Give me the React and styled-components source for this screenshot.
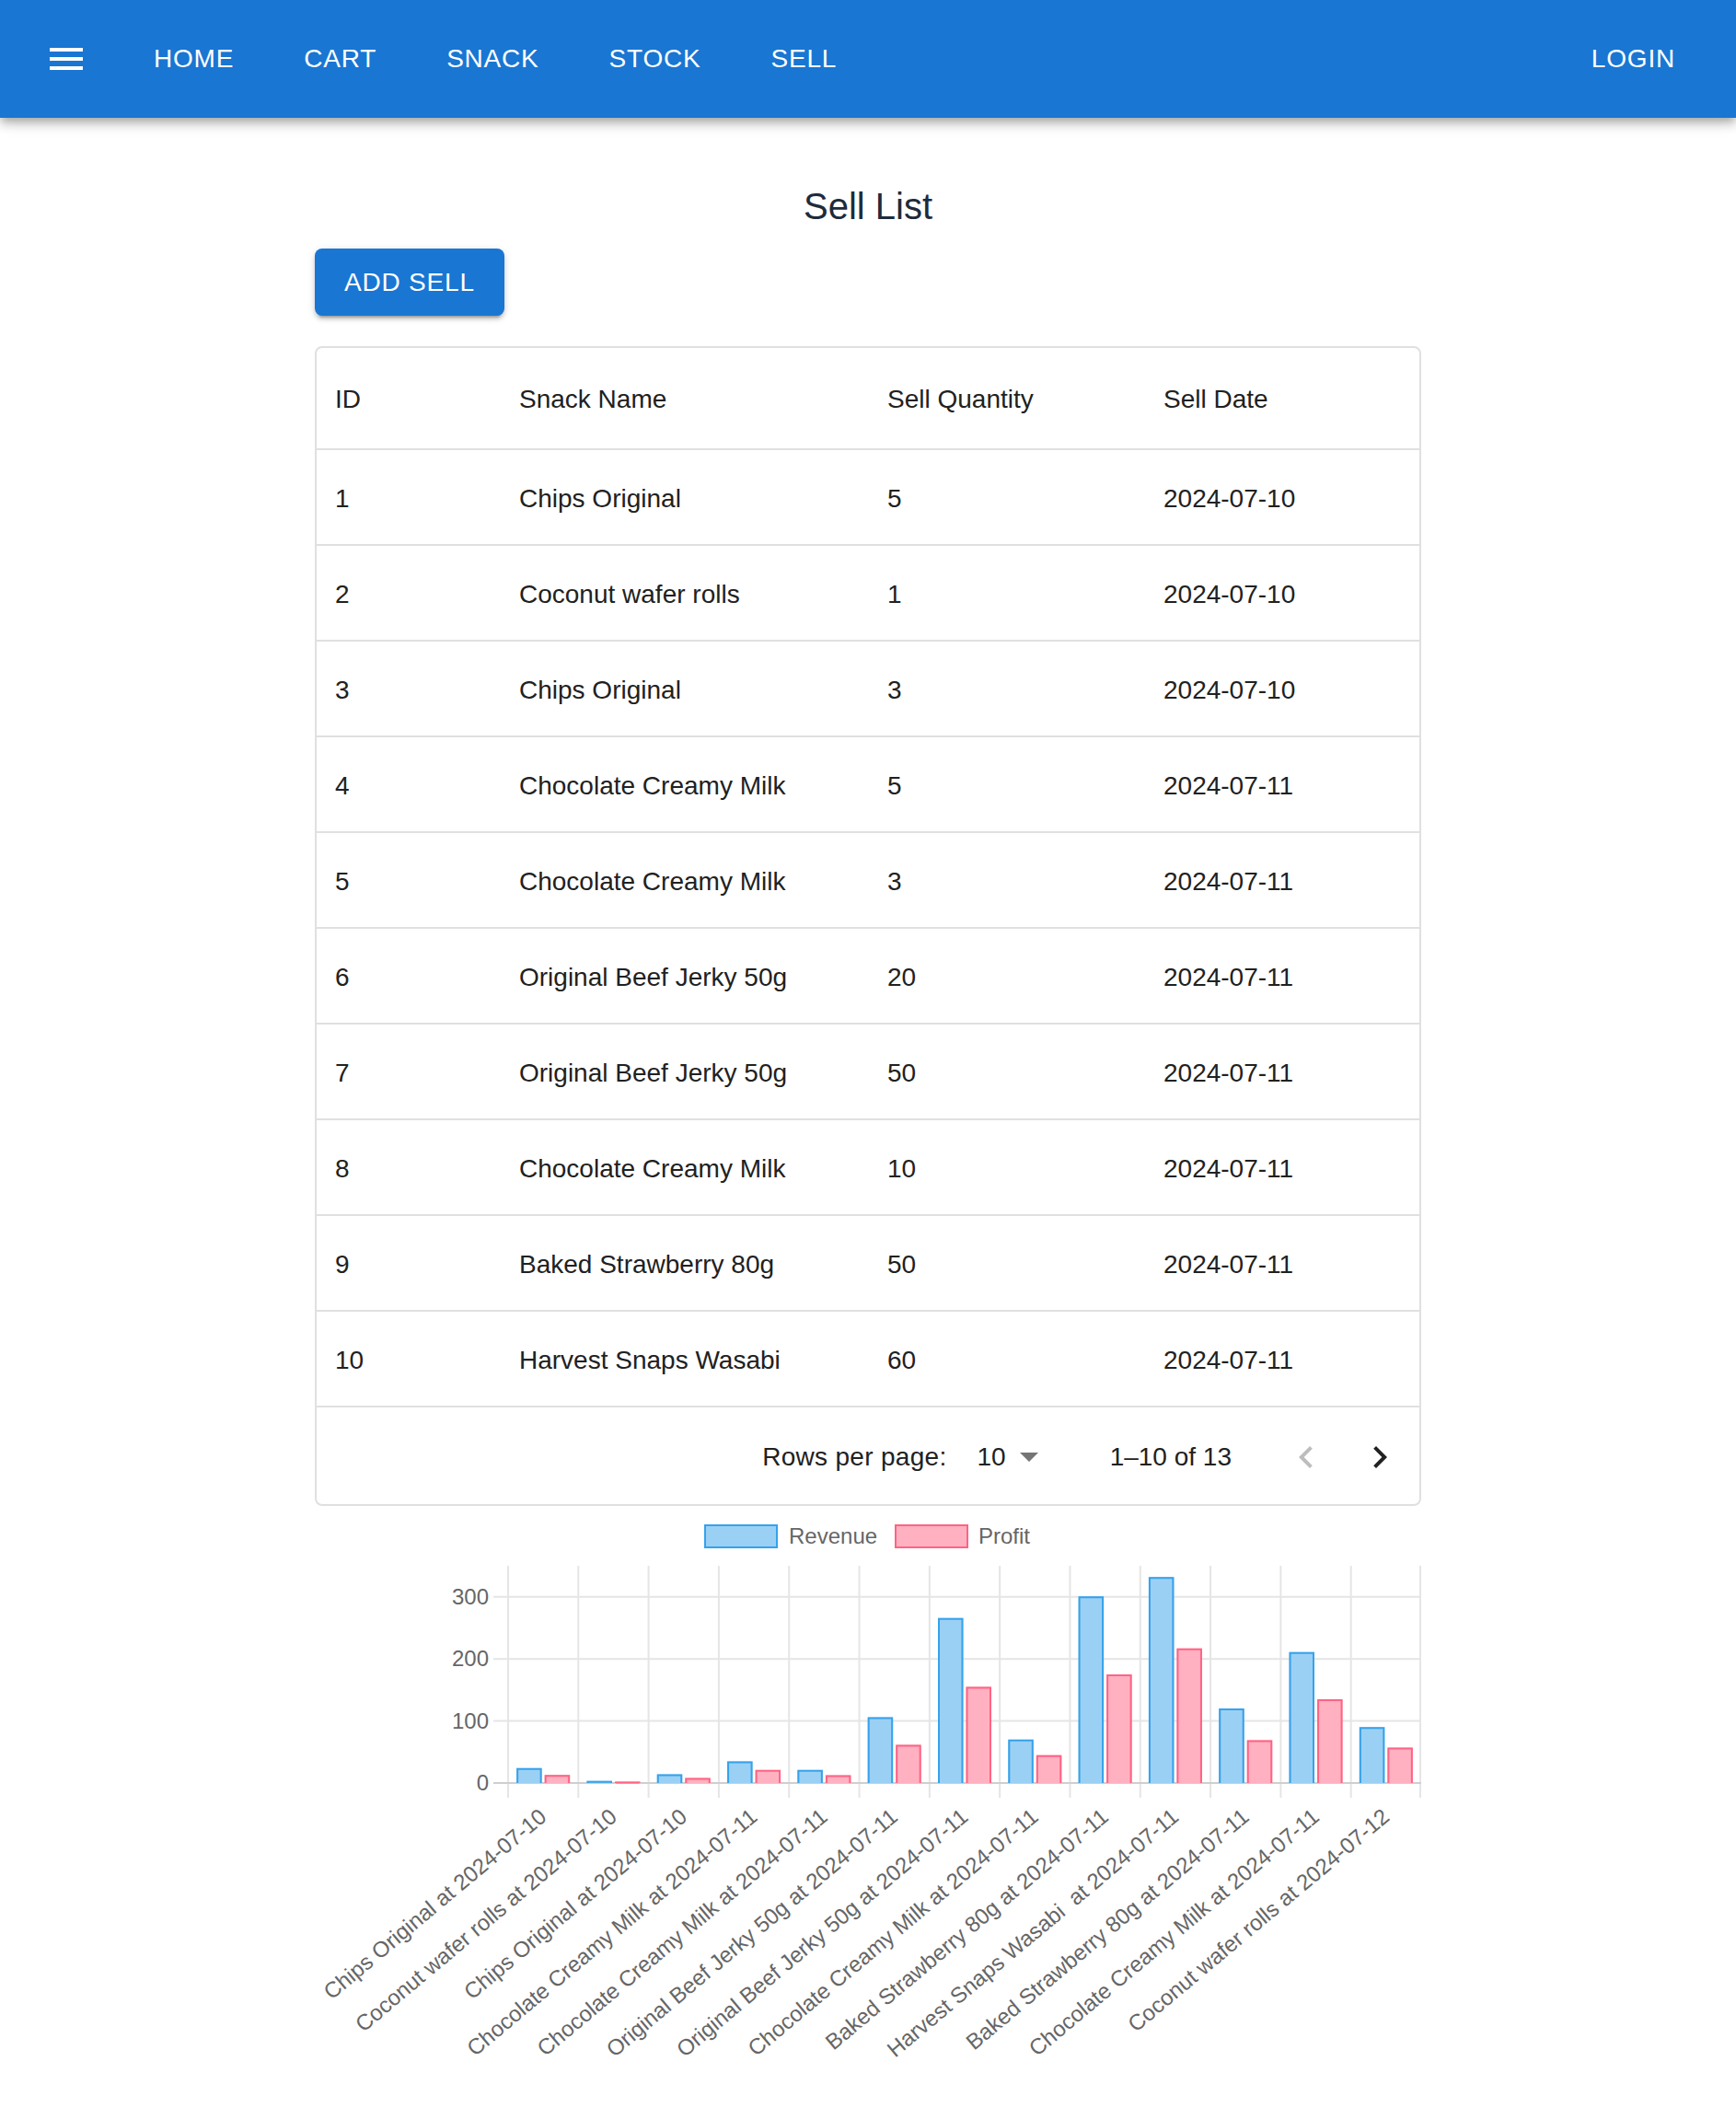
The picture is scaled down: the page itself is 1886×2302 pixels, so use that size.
import styled, { createGlobalStyle } from "styled-components";

const GlobalStyle = createGlobalStyle`
  body {
    margin: 0;
    background: #fff;
    font-family: "Liberation Sans", Arial, Helvetica, sans-serif;
  }
`;

const rows = [
  [1, "Chips Original", 5, "2024-07-10"],
  [2, "Coconut wafer rolls", 1, "2024-07-10"],
  [3, "Chips Original", 3, "2024-07-10"],
  [4, "Chocolate Creamy Milk", 5, "2024-07-11"],
  [5, "Chocolate Creamy Milk", 3, "2024-07-11"],
  [6, "Original Beef Jerky 50g", 20, "2024-07-11"],
  [7, "Original Beef Jerky 50g", 50, "2024-07-11"],
  [8, "Chocolate Creamy Milk", 10, "2024-07-11"],
  [9, "Baked Strawberry 80g", 50, "2024-07-11"],
  [10, "Harvest Snaps Wasabi", 60, "2024-07-11"],
];

const sales = [
  ["Chips Original at 2024-07-10", 24, 13],
  ["Coconut wafer rolls at 2024-07-10", 3.5, 2.4],
  ["Chips Original at 2024-07-10", 14, 8],
  ["Chocolate Creamy Milk at 2024-07-11", 35, 21],
  ["Chocolate Creamy Milk at 2024-07-11", 21, 12.5],
  ["Original Beef Jerky 50g at 2024-07-11", 106, 61.5],
  ["Original Beef Jerky 50g at 2024-07-11", 266, 155],
  ["Chocolate Creamy Milk at 2024-07-11", 70, 45],
  ["Baked Strawberry 80g at 2024-07-11", 301, 175],
  ["Harvest Snaps Wasabi  at 2024-07-11", 332, 217],
  ["Baked Strawberry 80g at 2024-07-11", 120, 69],
  ["Chocolate Creamy Milk at 2024-07-11", 211, 135],
  ["Coconut wafer rolls at 2024-07-12", 90, 57],
];

const tones = {
  revenue: { fill: "#9bd0f5", line: "#36a2eb" },
  profit: { fill: "#ffb1c1", line: "#ff6384" },
};

/* ---------- app bar ---------- */

const AppBar = styled.header`
  position: relative;
  z-index: 1;
  box-sizing: border-box;
  height: 128px;
  display: flex;
  align-items: center;
  padding: 0 50px 0 48px;
  background: #1976d2;
  box-shadow: 0 4px 8px -2px rgba(0, 0, 0, 0.2), 0 8px 10px 0 rgba(0, 0, 0, 0.14),
    0 2px 20px 0 rgba(0, 0, 0, 0.12);
`;

const MenuButton = styled.button`
  width: 48px;
  height: 48px;
  padding: 0;
  border: 0;
  background: none;
  color: #fff;
  display: flex;
`;

const Nav = styled.nav`
  display: flex;
  gap: 44px;
  margin-left: 55px;
  flex: 1;
`;

const NavButton = styled.button`
  height: 72px;
  padding: 0 16px;
  border: 0;
  background: none;
  color: #fff;
  font-family: inherit;
  font-size: 28px;
  font-weight: 500;
  letter-spacing: 0.8px;
  text-transform: uppercase;
`;

/* ---------- page ---------- */

const Main = styled.main`
  width: 1202px;
  margin: 0 auto;
  padding-top: 64px;
`;

const Title = styled.h6`
  margin: 0 0 14px;
  font-size: 40px;
  line-height: 64px;
  font-weight: 400;
  color: #1e2b3b;
  text-align: center;
`;

const Actions = styled.div`
  display: flex;
`;

const AddButton = styled.button`
  height: 73px;
  padding: 0 32px;
  border: 0;
  border-radius: 8px;
  background: #1976d2;
  color: #fff;
  font-family: inherit;
  font-size: 28px;
  font-weight: 500;
  letter-spacing: 0.8px;
  box-shadow: 0 6px 2px -4px rgba(0, 0, 0, 0.2), 0 4px 4px 0 rgba(0, 0, 0, 0.14),
    0 2px 10px 0 rgba(0, 0, 0, 0.12);
`;

/* ---------- data grid ---------- */

const Grid = styled.div`
  margin-top: 33px;
  border: 2px solid #e0e0e0;
  border-radius: 8px;
  color: #212121;
  font-size: 28px;
`;

const GridRow = styled.div`
  box-sizing: border-box;
  display: grid;
  grid-template-columns: 200px 400px 300px 1fr;
  align-items: center;
  height: ${(p) => (p.$head ? 111 : 104)}px;
  border-bottom: 2px solid #e0e0e0;
  font-weight: ${(p) => (p.$head ? 500 : 400)};
`;

const Cell = styled.div`
  padding: 3px 20px 0;
  white-space: nowrap;
`;

const Footer = styled.div`
  height: 105px;
  display: flex;
  align-items: center;
  justify-content: flex-end;
  padding: 2px 19px 0 0;
  box-sizing: border-box;
`;

const RowsLabel = styled.span`
  letter-spacing: 0.3px;
`;

const PageSize = styled.div`
  display: flex;
  align-items: center;
  gap: 15px;
  margin-left: 33px;
`;

const Range = styled.span`
  margin-left: 78px;
`;

const PageButton = styled.button`
  width: 48px;
  height: 48px;
  padding: 0;
  border: 0;
  background: none;
  display: flex;
  margin-left: ${(p) => p.$gap}px;
  color: ${(p) => (p.disabled ? "rgba(0,0,0,0.26)" : "rgba(0,0,0,0.87)")};
`;

/* ---------- chart ---------- */

const Chart = styled.svg`
  display: block;
  overflow: visible;
  font-family: "Liberation Sans", Arial, Helvetica, sans-serif;
`;

const ChartText = styled.text`
  fill: #666;
  font-size: 24px;
  white-space: pre;
`;

const GridLine = styled.line`
  stroke: ${(p) => (p.$strong ? "#cfcfcf" : "#e5e5e5")};
  stroke-width: 2;
`;

const BarFill = styled.rect`
  fill: ${(p) => tones[p.$tone].fill};
`;

const BarEdge = styled.path`
  fill: none;
  stroke: ${(p) => tones[p.$tone].line};
  stroke-width: 2;
`;

const LegendBox = styled.rect`
  fill: ${(p) => tones[p.$tone].fill};
  stroke: ${(p) => tones[p.$tone].line};
  stroke-width: 2;
`;

const AREA = { left: 210, right: 1202, top: 65, zero: 301, tick: 317 };
const PER_UNIT = 0.674;
const SLOT = (AREA.right - AREA.left) / sales.length;
const BAR_W = (SLOT * 0.8 * 0.9) / 2;

function ChartBar({ x, value, tone }) {
  const h = value * PER_UNIT;
  const y = AREA.zero - h;
  return (
    <g>
      <BarFill $tone={tone} x={x} y={y} width={BAR_W} height={h} />
      <BarEdge
        $tone={tone}
        d={`M${x + 1} ${AREA.zero} V${y + 1} H${x + BAR_W - 1} V${AREA.zero}`}
      />
    </g>
  );
}

function SalesChart() {
  const ticks = [0, 100, 200, 300];
  return (
    <Chart width="1202" height="640" viewBox="0 0 1202 640">
      <LegendBox $tone="revenue" x="424" y="21" width="78" height="24" />
      <ChartText x="515" y="41">Revenue</ChartText>
      <LegendBox $tone="profit" x="631" y="21" width="78" height="24" />
      <ChartText x="721" y="41">Profit</ChartText>

      {sales.map((_, i) => (
        <GridLine
          key={"v" + i}
          x1={AREA.left + SLOT * i}
          x2={AREA.left + SLOT * i}
          y1={AREA.top}
          y2={AREA.tick}
        />
      ))}
      <GridLine x1="1201" x2="1201" y1={AREA.top} y2={AREA.tick} />
      {ticks.map((t) => {
        const y = AREA.zero - t * PER_UNIT;
        return (
          <g key={t}>
            <GridLine $strong={t === 0} x1="194" x2={AREA.right} y1={y} y2={y} />
            <ChartText x="189" y={y + 8} textAnchor="end">
              {t}
            </ChartText>
          </g>
        );
      })}

      {sales.map(([label, revenue, profit], i) => {
        const c = AREA.left + SLOT * (i + 0.5);
        return (
          <g key={"b" + i}>
            <ChartBar x={c - 1.53 - BAR_W} value={revenue} tone="revenue" />
            <ChartBar x={c + 1.53} value={profit} tone="profit" />
            <ChartText
              x={c}
              y="342"
              textAnchor="end"
              transform={`rotate(-40 ${c} 334)`}
            >
              {label}
            </ChartText>
          </g>
        );
      })}
    </Chart>
  );
}

export default function App() {
  return (
    <>
      <GlobalStyle />
      <AppBar>
        <MenuButton aria-label="menu">
          <svg width="48" height="48" viewBox="0 0 24 24" fill="currentColor">
            <path d="M3 18h18v-2H3zm0-5h18v-2H3zm0-7v2h18V6z" />
          </svg>
        </MenuButton>
        <Nav>
          {["Home", "Cart", "Snack", "Stock", "Sell"].map((n) => (
            <NavButton key={n}>{n}</NavButton>
          ))}
        </Nav>
        <NavButton>Login</NavButton>
      </AppBar>

      <Main>
        <Title>Sell List</Title>
        <Actions>
          <AddButton>ADD SELL</AddButton>
        </Actions>

        <Grid>
          <GridRow $head>
            <Cell>ID</Cell>
            <Cell>Snack Name</Cell>
            <Cell>Sell Quantity</Cell>
            <Cell>Sell Date</Cell>
          </GridRow>
          {rows.map((r) => (
            <GridRow key={r[0]}>
              {r.map((v, i) => (
                <Cell key={i}>{v}</Cell>
              ))}
            </GridRow>
          ))}
          <Footer>
            <RowsLabel>Rows per page:</RowsLabel>
            <PageSize>
              <span>10</span>
              <svg width="20" height="10" viewBox="7 10 10 5">
                <path d="m7 10 5 5 5-5z" fill="#757575" />
              </svg>
            </PageSize>
            <Range>1–10 of 13</Range>
            <PageButton $gap={57} disabled aria-label="previous page">
              <svg width="48" height="48" viewBox="0 0 24 24" fill="currentColor">
                <path d="M15.41 16.59 10.83 12l4.58-4.59L14 6l-6 6 6 6z" />
              </svg>
            </PageButton>
            <PageButton $gap={32} aria-label="next page">
              <svg width="48" height="48" viewBox="0 0 24 24" fill="currentColor">
                <path d="M8.59 16.59 13.17 12 8.59 7.41 10 6l6 6-6 6z" />
              </svg>
            </PageButton>
          </Footer>
        </Grid>

        <SalesChart />
      </Main>
    </>
  );
}
